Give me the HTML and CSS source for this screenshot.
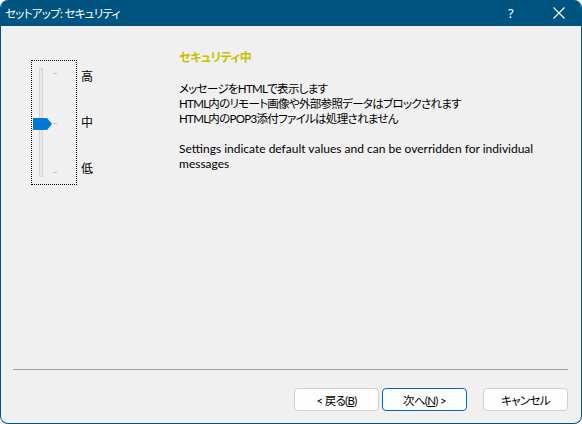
FILE: index.html
```html
<!DOCTYPE html>
<html lang="ja">
<head>
<meta charset="utf-8">
<link rel="stylesheet" href="styles.css">
</head>
<body>
<div class="window">
  <div class="titlebar">
    <span class="title ja">セットアップ: セキュリティ</span>
    <span class="help">?</span>
    <svg class="close" width="12" height="12" viewBox="0 0 12 12"><path d="M0.5 0.5 L11.5 11.5 M11.5 0.5 L0.5 11.5" stroke="#fff" stroke-width="1.1" fill="none"/></svg>
  </div>
  <div class="main">
    <div class="slider-area">
      <div class="slider">
        <div class="track"></div>
        <div class="ticks"><span class="tick"></span><span class="tick"></span><span class="tick"></span></div>
        <svg class="thumb" width="20" height="12" viewBox="0 0 20 12"><path d="M0 0 H14 L19 6 L14 12 H0 Z" fill="#0078d4"/></svg>
      </div>
      <div class="labels"><span>高</span><span>中</span><span>低</span></div>
    </div>
    <div class="info">
      <div class="heading ja">セキュリティ中</div>
      <p class="lines ja">メッセージをHTMLで表示します<br>HTML内のリモート画像や外部参照データはブロックされます<br>HTML内のPOP3添付ファイルは処理されません</p>
      <p class="lines">Settings indicate default values and can be overridden for individual messages</p>
    </div>
  </div>
  <div class="separator"></div>
  <div class="buttons">
    <button class="btn ja">&lt; 戻る(<u>B</u>)</button>
    <button class="btn default ja">次へ(<u>N</u>) &gt;</button>
    <button class="btn cancel ja">キャンセル</button>
  </div>
</div>
</body>
</html>
```
FILE: styles.css
```css
html { background: #ffffff; }
body {
  margin: 0;
  font-family: "Lato", "Noto Sans CJK JP", sans-serif;
  font-size: 12px;
  color: #000;
  font-feature-settings: "palt";
}
.window {
  box-sizing: border-box;
  width: 582px;
  height: 424px;
  border: 1px solid #005580;
  border-top: none;
  border-radius: 8px;
  overflow: hidden;
  background: #f0f0f0;
  display: flex;
  flex-direction: column;
}
.titlebar {
  height: 26px;
  flex: none;
  background: #005580;
  color: #fff;
  display: flex;
  align-items: center;
  padding-left: 4px;
  font-size: 12px;
}
.title { flex: 1; }
.ja { font-size: 11.5px; letter-spacing: -0.7px; }
.help { width: 12px; margin-right: 33px; font-family: "Noto Sans", sans-serif; font-size: 13px; }
.close { margin-right: 16px; }
.main {
  flex: 1;
  display: flex;
  align-items: flex-start;
  padding: 24px 0 0 30px;
}
.slider-area {
  display: flex;
  margin-top: 10px;
}
.slider {
  position: relative;
  box-sizing: border-box;
  width: 46px;
  height: 125px;
  border: 1px dotted #000;
}
.track {
  position: absolute;
  left: 7px;
  top: 7px;
  width: 2px;
  height: 107px;
  border: 1px solid #d6d6d6;
  background: #e7e7e7;
}
.ticks {
  position: absolute;
  left: 21px;
  top: 12px;
  height: 100px;
  display: flex;
  flex-direction: column;
  justify-content: space-between;
}
.tick { display: block; width: 4px; height: 1px; background: #c4c4c4; }
.thumb { position: absolute; left: 1px; top: 57px; }
.labels {
  display: flex;
  flex-direction: column;
  gap: 30px;
  margin-left: 4px;
  margin-top: 9px;
  line-height: 16px;
}
.info {
  margin-left: 86px;
  width: 380px;
}
.heading {
  color: #c3c300;
  font-weight: bold;
  line-height: 16px;
  letter-spacing: -0.4px;
  font-size: 12px;
}
.lines {
  margin: 15px 0 0;
  line-height: 15px;
}
.separator {
  flex: none;
  height: 1px;
  background: #a0a0a0;
  margin: 0 13px 0 12px;
}
.buttons {
  flex: none;
  display: flex;
  justify-content: flex-end;
  gap: 3px;
  padding: 18px 13px 12px 0;
}
.btn {
  box-sizing: border-box;
  width: 85px;
  height: 23px;
  border: 1px solid #d0d0d0;
  border-radius: 4px;
  background: #fdfdfd;
  font-family: "Lato", "Noto Sans CJK JP", sans-serif;
  font-feature-settings: "palt";
  color: #000;
  padding: 0;
}
.btn.default { border-color: #0067c0; }
.btn.cancel { margin-left: 13px; }
```
